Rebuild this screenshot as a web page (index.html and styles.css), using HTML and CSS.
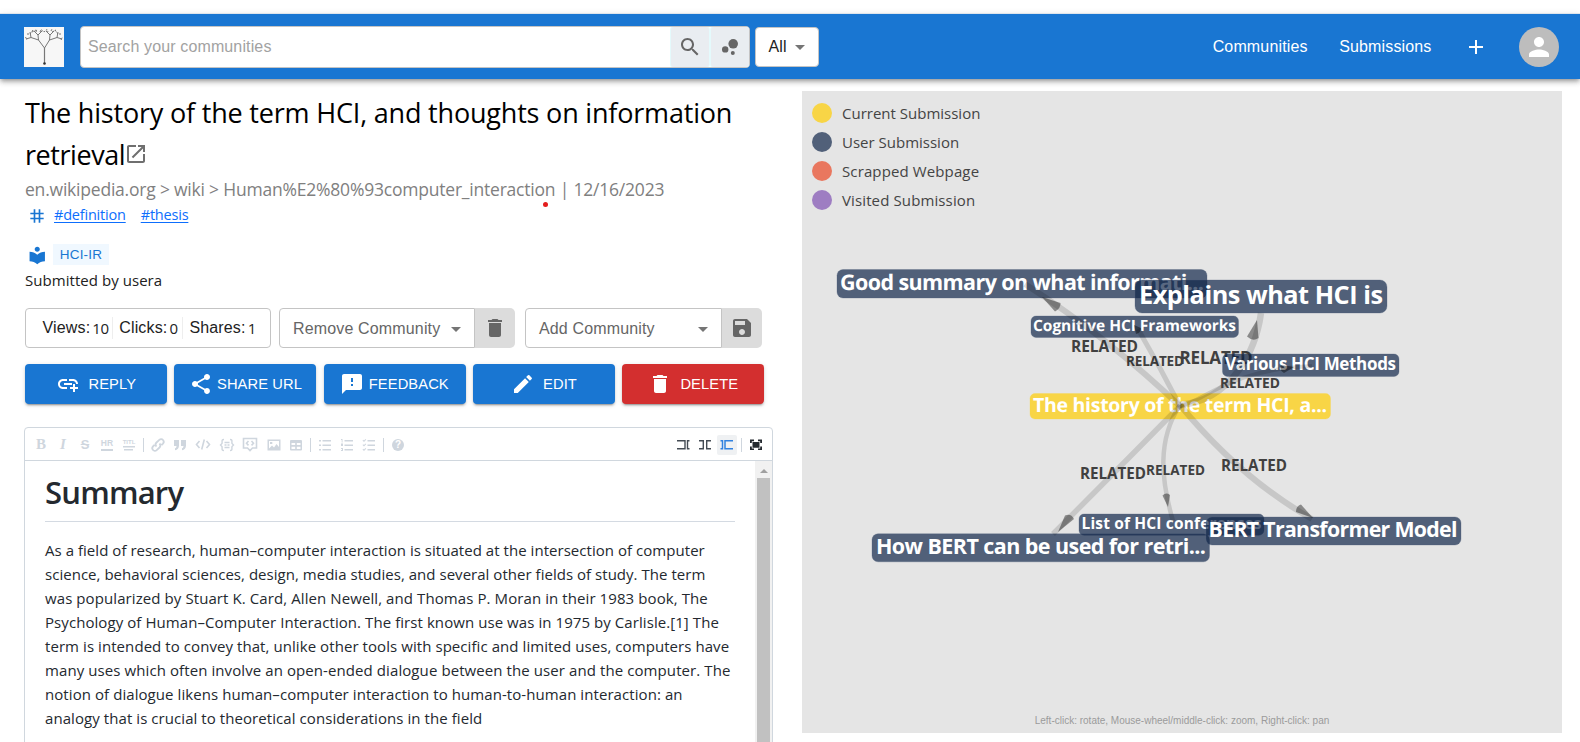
FILE: index.html
```
<!DOCTYPE html>
<html lang="en">
<head>
<meta charset="utf-8">
<title>The history of the term HCI</title>
<link rel="stylesheet" href="styles.css">
</head>
<body>
<svg width="0" height="0" class="defs">
  <symbol id="trash" viewBox="0 0 24 24"><path d="M6 19c0 1.100.9 2 2 2h8c1.100 0 2-.9 2-2V7H6v12zM19 4h-3.500l-1-1h-5l-1 1H5v2h14V4z"/></symbol>
  <symbol id="caret" viewBox="0 0 24 24"><path d="m7 10 5 5 5-5z"/></symbol>
</svg>
<header class="bar">
  <svg class="logo" viewBox="0 0 40 40">
    <g fill="none" stroke="#777" stroke-width="1">
      <path stroke-width="1.200" d="M20.500 37V21"/>
      <path d="M20.500 21L14.500 13M20.500 21L25.500 13"/>
      <path d="M14.500 13L7 10.500M14.500 13L14 8M25.500 13L26 8M25.500 13L33 10.500"/>
      <path d="M7 10.500L2 12M7 10.500L6 5M14 8L10 4M14 8L18 4M26 8L22 4M26 8L30 4M33 10.500L38 12M33 10.500L34 5"/>
      <path stroke-dasharray="2 1" d="M1.500 10L3 13M3 7L6 7L9 3M8 5L12 3M12 5L13 2M16 5L17 2.500L20 5L23 2.500L24 5M27 4L28 2M28 5L32 3M31 3L34 7L37 7M37 13L38.500 10"/>
    </g>
    <circle cx="20.500" cy="36.500" r="1.300" fill="#333"/>
  </svg>
  <div class="search">
    <span class="placeholder">Search your communities</span>
    <button class="sbtn"><svg viewBox="0 0 24 24"><path d="M15.500 14h-.79l-.28-.27C15.410 12.590 16 11.110 16 9.500 16 5.910 13.090 3 9.500 3S3 5.910 3 9.500 5.910 16 9.500 16c1.610 0 3.090-.59 4.230-1.570l.27.28v.79l5 4.990L20.490 19l-4.990-5zm-6 0C7.010 14 5 11.990 5 9.500S7.010 5 9.500 5 14 7.010 14 9.500 11.990 14 9.500 14z"/></svg></button>
    <button class="sbtn"><svg viewBox="0 0 24 24"><circle cx="7.200" cy="14.400" r="3.200"/><circle cx="14.800" cy="18" r="2"/><circle cx="15.200" cy="8.800" r="4.800"/></svg></button>
  </div>
  <div class="scope"><span>All</span><svg viewBox="0 0 24 24"><use href="#caret"/></svg></div>
  <nav class="nav">
    <a class="n1">Communities</a><a class="n2">Submissions</a>
    <svg class="plus" viewBox="0 0 24 24"><path d="M19 13h-6v6h-2v-6H5v-2h6V5h2v6h6v2z"/></svg>
    <span class="avatar"><svg viewBox="0 0 24 24"><path d="M12 12c2.210 0 4-1.790 4-4s-1.790-4-4-4-4 1.790-4 4 1.790 4 4 4zm0 2c-2.670 0-8 1.340-8 4v2h16v-2c0-2.660-5.330-4-8-4z"/></svg></span>
  </nav>
</header>
<main class="main">
  <section class="left">
    <h1 class="title"><span class="t1">The history of the term HCI, and thoughts on information</span><br><span class="t2">retrieval</span><svg class="open" viewBox="0 0 24 24"><path d="M19 19H5V5h7V3H5c-1.110 0-2 .9-2 2v14c0 1.100.89 2 2 2h14c1.100 0 2-.9 2-2v-7h-2v7zM14 3v2h3.590l-9.830 9.830 1.410 1.410L19 6.410V10h2V3h-7z"/></svg></h1>
    <div class="meta">en.wikipedia.org &gt; wiki &gt; Human%E2%80%93computer_interaction | 12/16/2023<i class="dot"></i></div>
    <div class="tags">
      <svg viewBox="0 0 24 24"><path d="M20 10V8h-4V4h-2v4h-4V4H8v4H4v2h4v4H4v2h4v4h2v-4h4v4h2v-4h4v-2h-4v-4h4zm-6 4h-4v-4h4v4z"/></svg>
      <a>#definition</a><a>#thesis</a>
    </div>
    <div class="community">
      <svg viewBox="0 0 24 24"><path d="M12 11.550C9.640 9.350 6.480 8 3 8v11c3.480 0 6.640 1.350 9 3.550 2.360-2.190 5.520-3.550 9-3.550V8c-3.480 0-6.640 1.350-9 3.550zM12 8c1.660 0 3-1.340 3-3s-1.340-3-3-3-3 1.340-3 3 1.340 3 3 3z"/></svg>
      <span class="chip">HCI-IR</span>
    </div>
    <div class="by">Submitted by usera</div>
    <div class="controls">
      <div class="stats"><span>Views:</span><b class="v1">10</b><span>Clicks:</span><b class="v2">0</b><span>Shares:</span><b class="v3">1</b></div>
      <div class="pick remove"><div class="sel"><span>Remove Community</span><svg viewBox="0 0 24 24"><use href="#caret"/></svg></div><button class="act"><svg viewBox="0 0 24 24"><use href="#trash"/></svg></button></div>
      <div class="pick add"><div class="sel"><span>Add Community</span><svg viewBox="0 0 24 24"><use href="#caret"/></svg></div><button class="act"><svg viewBox="0 0 24 24"><path d="M17 3H5c-1.110 0-2 .9-2 2v14c0 1.100.89 2 2 2h14c1.100 0 2-.9 2-2V7l-4-4zm-5 16c-1.660 0-3-1.340-3-3s1.340-3 3-3 3 1.340 3 3-1.340 3-3 3zm3-10H5V5h10v4z"/></svg></button></div>
    </div>
    <div class="actions">
      <button class="btn reply"><svg viewBox="0 0 24 24"><path d="M8 11h8v2H8zm12.100 1H22c0-2.760-2.240-5-5-5h-4v1.900h4c1.710 0 3.100 1.390 3.100 3.100zM3.900 12c0-1.710 1.390-3.100 3.100-3.100h4V7H7c-2.760 0-5 2.240-5 5s2.240 5 5 5h4v-1.900H7c-1.710 0-3.100-1.390-3.100-3.100zM19 12h-2v3h-3v2h3v3h2v-3h3v-2h-3z"/></svg>REPLY</button>
      <button class="btn share"><svg viewBox="0 0 24 24"><path d="M18 16.080c-.76 0-1.440.3-1.960.77L8.910 12.700c.05-.23.09-.46.09-.7s-.04-.47-.09-.7l7.050-4.110c.54.5 1.250.81 2.040.81 1.660 0 3-1.340 3-3s-1.340-3-3-3-3 1.340-3 3c0 .24.04.47.09.7L8.040 9.810C7.500 9.310 6.790 9 6 9c-1.660 0-3 1.340-3 3s1.340 3 3 3c.79 0 1.500-.31 2.040-.81l7.120 4.160c-.05.21-.08.43-.08.65 0 1.610 1.310 2.920 2.920 2.920 1.610 0 2.920-1.310 2.920-2.920s-1.310-2.920-2.920-2.920z"/></svg>SHARE URL</button>
      <button class="btn feed"><svg viewBox="0 0 24 24"><path d="M20 2H4c-1.100 0-1.990.9-1.990 2L2 22l4-4h14c1.100 0 2-.9 2-2V4c0-1.100-.9-2-2-2zm-7 12h-2v-2h2v2zm0-4h-2V6h2v4z"/></svg>FEEDBACK</button>
      <button class="btn edit"><svg viewBox="0 0 24 24"><path d="M3 17.250V21h3.750L17.810 9.940l-3.750-3.750L3 17.250zM20.710 7.040c.39-.39.39-1.020 0-1.410l-2.340-2.340a.996.996 0 0 0-1.410 0l-1.830 1.830 3.750 3.750 1.830-1.830z"/></svg>EDIT</button>
      <button class="btn delete"><svg viewBox="0 0 24 24"><use href="#trash"/></svg>DELETE</button>
    </div>
    <div class="editor">
      <div class="toolbar">
        <span class="tb serif">B</span>
        <span class="tb serif it">I</span>
        <span class="tb strike">S</span>
        <span class="tb hr">HR</span>
        <span class="tb ttl">TITL</span>
        <i class="sep"></i>
        <span class="tb"><svg viewBox="0 0 16 16" fill="none" stroke="#cfd6de" stroke-width="1.800"><path d="M6.500 9.500c-1.500-1.500-1-3 0-4l2.800-2.600c1.200-1.100 2.800-.9 3.700.1s1 2.500 0 3.600L11.500 8M9.500 6.500c1.500 1.500 1 3 0 4l-2.800 2.600c-1.200 1.100-2.800.9-3.700-.1s-1-2.500 0-3.600L4.500 8"/></svg></span>
        <span class="tb"><svg viewBox="0 0 16 16"><path d="M2 3h5v5.500C7 11 5.500 13 3 13.300v-2c1-.4 1.500-1.200 1.500-2.300H2zM9 3h5v5.500c0 2.500-1.500 4.500-4 4.800v-2c1-.4 1.500-1.200 1.500-2.300H9z"/></svg></span>
        <span class="tb w24"><svg viewBox="0 0 16 16" fill="none" stroke="#cfd6de" stroke-width="1.600"><path d="M4.500 4L1.500 7.500l3 3.500M11.500 4l3 3.500-3 3.500M9.300 2.500l-2.600 10"/></svg></span>
        <span class="tb w23"><svg viewBox="0 0 16 16" fill="none" stroke="#cfd6de" stroke-width="1.400"><path d="M5 2.500c-3 0-1.500 2-2 4L1.500 8 3 9.500c.5 2-1 4 2 4M11 2.500c3 0 1.500 2 2 4L14.500 8 13 9.500c-.5 2 1 4-2 4M5.500 5.500h5M5.500 8h2M8.500 8h2M5.500 10.500h5"/></svg></span>
        <span class="tb w24"><svg viewBox="0 0 16 16" fill="none" stroke="#cfd6de" stroke-width="1.600"><path d="M1.500 1.500h13v9.500h-4L8 13.500 5.500 11h-4zM6.500 4L4.500 6.200l2 2.200M9.500 4l2 2.200-2 2.200"/></svg></span>
        <span class="tb w23"><svg viewBox="0 0 16 16"><path fill-rule="evenodd" d="M1.500 2.500h13v11h-13zM3 4v7.500l3-3 2 2L10.500 7l2.500 3V4zM4 5h2.300v2H4z"/></svg></span>
        <span class="tb"><svg viewBox="0 0 16 16"><path fill-rule="evenodd" d="M3 3h10a1 1 0 0 1 1 1v8.500a1 1 0 0 1-1 1H3a1 1 0 0 1-1-1V4a1 1 0 0 1 1-1zM3.500 6v2h3.700V6zM8.800 6v2h3.700V6zM3.500 9.700V12h3.700V9.700zM8.800 9.700V12h3.700V9.700z"/></svg></span>
        <i class="sep"></i>
        <span class="tb"><svg viewBox="0 0 16 16"><path d="M2 3h2v1.500H2zM5.500 3H14v1.500H5.500zM2 7.500h2V9H2zM5.500 7.500H14V9H5.500zM2 12h2v1.500H2zM5.500 12H14v1.500H5.500z"/></svg></span>
        <span class="tb"><svg viewBox="0 0 16 16"><path d="M2 2h1.500v3.500H2.700V3H2zM5.500 3H14v1.500H5.500zM2 6.500h2V9H2zM5.500 7.500H14V9H5.500zM2 11h2v3H2v-1h1v-1H2zM5.500 12H14v1.500H5.500z"/></svg></span>
        <span class="tb"><svg viewBox="0 0 16 16"><path d="M1.500 3.500l.7-.8.8.8L4.500 2l.7.7L3 5zM6.500 3H14v1.500H6.500zM1.500 8l.7-.8.8.8 1.500-1.500.7.7L3 9.500zM6.500 7.500H14V9H6.500zM1.500 12.500l.7-.8.800.8L4.500 11l.7.7L3 14zM6.500 12H14v1.500H6.500z"/></svg></span>
        <i class="sep"></i>
        <span class="tb help"><b>?</b></span>
        <div class="views">
          <span class="tb dark"><svg viewBox="0 0 16 16" fill="none" stroke="#444c54" stroke-width="1.400"><path d="M2 3.700h8v8.100H2M14.500 3.700h-2v8.100h2"/></svg></span>
          <span class="tb dark"><svg viewBox="0 0 16 16" fill="none" stroke="#444c54" stroke-width="1.400"><path d="M2 3.700h4.300v8.100H2M14 3.700H9.700v8.100H14"/></svg></span>
          <span class="tb dark on"><svg viewBox="0 0 16 16" fill="none" stroke="#3182e0" stroke-width="1.500"><path d="M1.500 3.700h2v8.100h-2M14 3.700H6v8.100h8"/></svg></span>
          <i class="sep"></i>
          <span class="tb dark"><svg viewBox="0 0 16 16"><path fill="#24292f" d="M2 2.500h4v1.700H3.800V6H2zM14 2.500h-4v1.700h2.200V6H14zM2 13.100h4v-1.700H3.800V9.600H2zM14 13.100h-4v-1.700h2.200V9.600H14zM4.500 5h7v5.700h-7z"/></svg></span>
        </div>
      </div>
      <div class="pane">
        <article class="doc">
          <h2><span>Summary</span></h2>
          <p><span class="l1">As a field of research, human–computer interaction is situated at the intersection of computer</span><br>
          <span class="l2">science, behavioral sciences, design, media studies, and several other fields of study. The term</span><br>
          <span class="l3">was popularized by Stuart K. Card, Allen Newell, and Thomas P. Moran in their 1983 book, The</span><br>
          <span class="l4">Psychology of Human–Computer Interaction. The first known use was in 1975 by Carlisle.[1] The</span><br>
          <span class="l5">term is intended to convey that, unlike other tools with specific and limited uses, computers have</span><br>
          <span class="l6">many uses which often involve an open-ended dialogue between the user and the computer. The</span><br>
          <span class="l7">notion of dialogue likens human–computer interaction to human-to-human interaction: an</span><br>
          <span class="l8">analogy that is crucial to theoretical considerations in the field</span></p>
        </article>
        <div class="scroll"><i class="up"></i><i class="thumb"></i></div>
      </div>
    </div>
  </section>
  <section class="graph">
    <svg class="net" viewBox="802 91 760 642">
      <g class="node" text-rendering="geometricPrecision">
        <rect x="837" y="269.500" width="370" height="28.500" rx="6"/><text x="840" y="290" font-size="21.500" textLength="364">Good summary on what informati...</text>
        <rect x="1031" y="316" width="207.500" height="21.500" rx="5"/><text x="1033" y="331" font-size="15.500" textLength="203">Cognitive HCI Frameworks</text>
        <rect class="cur" x="1030" y="393.500" width="300.500" height="25.500" rx="5"/><text x="1033" y="412" font-size="19.500" textLength="294">The history of the term HCI, a...</text>
      </g>
      <g class="rel">
        <text x="1071" y="352" font-size="15.500" textLength="67">RELATED</text>
        <text x="1126" y="366" font-size="13.500" textLength="58">RELATED</text>
        <text x="1179.500" y="363.700" font-size="17" textLength="73">RELATED</text>
      </g>
      <g class="node">
        <rect x="1135" y="280" width="252" height="33" rx="7"/><text x="1139" y="303.700" font-size="25.300" textLength="244">Explains what HCI is</text>
        <rect x="1222.500" y="354" width="176.500" height="22.500" rx="5"/><text x="1225" y="370.300" font-size="17" textLength="171">Various HCI Methods</text>
        <rect x="1079" y="514" width="185" height="21.300" rx="5"/><text x="1081.500" y="528.700" font-size="15.500" textLength="180">List of HCI conferences</text>
        <rect x="872" y="533.800" width="337.500" height="28" rx="6"/><text x="876" y="554.300" font-size="21.500" textLength="330">How BERT can be used for retri...</text>
        <rect x="1206" y="517" width="255" height="28" rx="6"/><text x="1208.500" y="536.700" font-size="21.300" textLength="249">BERT Transformer Model</text>
      </g>
      <g class="edge">
        <path stroke-width="6" d="M1182 408Q1110 339 1025 284"/>
        <path stroke-width="5" d="M1180 406Q1160 367 1138 329"/>
        <path stroke-width="6.500" d="M1180 405C1232 400 1256 350 1261 313"/>
        <path stroke-width="4" d="M1180 406C1205 402 1225 370 1312 366"/>
        <path stroke-width="5.500" d="M1180 406Q1115 472 1053 534"/>
        <path stroke-width="4.500" d="M1180 405C1157 440 1161 480 1173 521"/>
        <path stroke-width="6" d="M1180 405Q1240 478 1312 519"/>
      </g>
      <g class="tip">
        <path d="M1042 297L1060.500 303Q1061 308 1055 311.500Z"/>
        <path d="M1257 320L1258.500 338Q1253 342 1247 336.500Z"/>
        <path d="M1134 325L1141 328Q1141 333 1136 334Z"/>
        <path d="M1294 367L1281 365Q1279 370 1284 373Z"/>
        <path d="M1058 532L1065 515.500Q1071 513 1074 519Z"/>
        <path d="M1168 507L1162.500 495.500Q1166 492 1170 495Z"/>
        <path d="M1313 518L1296 512Q1296 506 1301 504.500Z"/>
      </g>
      <g class="rel">
        <text x="1220" y="388" font-size="13.800" textLength="60">RELATED</text>
        <text x="1080" y="478.900" font-size="15.200" textLength="66">RELATED</text>
        <text x="1146" y="475" font-size="13.500" textLength="59">RELATED</text>
        <text x="1221" y="471" font-size="15.200" textLength="66">RELATED</text>
      </g>
    </svg>
    <ul class="legend">
      <li><i class="c1"></i><span>Current Submission</span></li>
      <li><i class="c2"></i><span>User Submission</span></li>
      <li><i class="c3"></i><span class="wide">Scrapped Webpage</span></li>
      <li><i class="c4"></i><span class="wide">Visited Submission</span></li>
    </ul>
    <div class="hint">Left-click: rotate, Mouse-wheel/middle-click: zoom, Right-click: pan</div>
  </section>
</main>
</body>
</html>
```
FILE: styles.css
```
* { box-sizing: border-box; }
body { margin: 0; height: 742px; overflow: hidden; background: #fff; font-family: "Open Sans", "Noto Sans", sans-serif; padding-top: 14px; }
svg { display: block; flex: none; }
button { border: 0; padding: 0; margin: 0; font: inherit; display: flex; align-items: center; justify-content: center; }
.defs { position: absolute; }
.bar { height: 65px; background: #1976d2; display: flex; align-items: center; padding: 0 21px 0 24px; box-shadow: 0 -1px 0 #dfe5ec, 0 2px 4px -1px rgba(0,0,0,.3), 0 4px 5px rgba(0,0,0,.14), 0 1px 8px rgba(0,0,0,.1); font-family: "Liberation Sans", Arial, sans-serif; font-size: 16px; letter-spacing: .15px; position: relative; }
.logo { width: 40px; height: 40px; background: #f7f7f7; margin-top: 1px; }
.search { margin-left: 16px; width: 670px; height: 42px; background: #fff; border: 1px solid #c4c4c4; border-radius: 4px; display: flex; overflow: hidden; align-items: center; }
.placeholder { flex: 1; padding-left: 7px; color: #a2a2a2; letter-spacing: .13px; }
.sbtn { width: 38px; height: 40px; background: #e9edf1; border-radius: 3px; margin-right: 2px; box-shadow: 0 0 0 1px #e4fafc; fill: #666; }
.sbtn + .sbtn { margin-right: 0; }
.sbtn svg { width: 24px; height: 24px; }
.scope { margin-left: 5px; width: 64px; height: 40px; border: 1px solid #c4c4c4; border-radius: 4px; background: #fff; display: flex; align-items: center; padding-left: 12.500px; color: #222; fill: #757575; }
.scope svg { width: 24px; height: 24px; margin-left: 1.500px; margin-top: 1px; }
.nav { margin-left: auto; display: flex; align-items: center; color: #fff; fill: #fff; }
.n1 { margin-right: 31.500px; }
.n2 { margin-right: 32.500px; }
.plus { width: 24px; height: 24px; }
.avatar { margin-left: 31px; width: 40px; height: 40px; border-radius: 50%; background: #bdbdbd; display: flex; align-items: center; justify-content: center; }
.avatar svg { width: 30px; height: 30px; }
.main { display: flex; align-items: flex-start; height: 663px; }
.left { width: 802px; padding: 13px 0 0 25px; }
.title { margin: 0; font-size: 27px; font-weight: 400; line-height: 42px; height: 84px; color: #000; white-space: nowrap; letter-spacing: -.19px; }
.t2 { letter-spacing: -.45px; }
.open { display: inline-block; width: 24px; height: 24px; fill: #6f6f6f; vertical-align: -1px; margin-left: -1px; }
.meta { height: 26px; line-height: 26px; font-size: 17.500px; letter-spacing: -.21px; color: #808080; position: relative; white-space: nowrap; }
.dot { position: absolute; left: 518px; top: 26px; width: 5px; height: 5px; border-radius: 50%; background: #e41d1d; }
.tags { display: flex; align-items: center; height: 24px; padding-left: 2px; font-size: 14.500px; letter-spacing: -.2px; }
.tags svg { width: 20px; height: 20px; fill: #1976d2; margin-right: 7px; margin-top: 3px; }
.tags a { color: #0d6efd; text-decoration: underline; text-underline-offset: 2px; margin-right: 15px; }
.community { margin-top: 18px; display: flex; height: 21px; padding-left: 1.500px; }
.community svg { width: 20.500px; height: 20.500px; fill: #1976d2; margin-top: 1px; }
.chip { margin-left: 6px; width: 56px; background: #f0f8ff; color: #1976d2; font: 13.500px/22px "Liberation Sans", Arial, sans-serif; letter-spacing: .2px; text-align: center; }
.by { margin-top: 3px; height: 24px; line-height: 24px; font-size: 15px; letter-spacing: .05px; color: #212121; }
.controls { margin-top: 16px; display: flex; height: 40px; font-family: "Liberation Sans", Arial, sans-serif; font-size: 16px; letter-spacing: .15px; }
.stats { width: 246px; border: 1px solid #c4c4c4; border-radius: 4px; display: flex; align-items: center; padding-left: 16.500px; color: #222; white-space: nowrap; }
.stats b { font: 400 15px/22px "Open Sans", sans-serif; letter-spacing: -.3px; padding-left: 2px; border-right: 1px solid #eee; margin-right: 6px; }
.v1 { width: 23px; }
.v2 { width: 16px; }
.stats .v3 { border: 0; }
.pick { display: flex; margin-left: 8px; }
.add { margin-left: 10px; }
.sel { width: 196px; border: 1px solid #c4c4c4; border-radius: 4px 0 0 4px; display: flex; align-items: center; justify-content: space-between; padding: 1px 6px 0 13px; color: #666; fill: #757575; }
.add .sel { width: 197px; }
.sel svg { width: 24px; height: 24px; }
.act { width: 40px; background: #dcdcdc; border-radius: 0 5px 5px 0; fill: #666; }
.act svg { width: 24px; height: 24px; }
.actions { margin-top: 16px; display: flex; gap: 7.250px; height: 40px; }
.btn { width: 142px; border-radius: 4px; background: #1976d2; color: #fff; fill: #fff; font: 14.700px "Liberation Sans", Arial, sans-serif; letter-spacing: .1px; box-shadow: 0 3px 1px -2px rgba(0,0,0,.2), 0 2px 2px rgba(0,0,0,.14), 0 1px 5px rgba(0,0,0,.12); white-space: nowrap; }
.btn svg { width: 24px; height: 24px; margin-right: 8.500px; }
.share svg, .feed svg { margin-right: 4.500px; }
.delete { background: #d32f2f; }
.editor { margin: 23px 0 0 -1px; width: 749px; height: 330px; border: 1px solid #d0d7de; border-radius: 4px; font-family: "Open Sans", sans-serif; }
.toolbar { height: 33px; border-bottom: 1px solid #d0d7de; display: flex; align-items: center; padding: 1px 0 0 5px; }
.tb { width: 22px; height: 20px; display: flex; align-items: center; justify-content: center; color: #cfd6de; fill: #cfd6de; font-weight: 700; flex: none; }
.tb svg { width: 16px; height: 16px; }
.w23 { width: 23px; }
.w24 { width: 24px; }
.sep { width: 1px; height: 14px; background: #cfd6de; margin: 0 3px; }
.serif { font-family: "Liberation Serif", serif; font-size: 15px; }
.it { font-style: italic; }
.strike { font: 700 13px "Liberation Sans", sans-serif; text-decoration: line-through; }
.hr, .ttl { font: 700 8.500px/8px "Liberation Sans", sans-serif; }
.hr { background: linear-gradient(#cfd6de, #cfd6de) center 14px / 12px 2px no-repeat; padding-bottom: 3px; }
.ttl { font-size: 6px; background: linear-gradient(#cfd6de, #cfd6de) center 11px / 12px 1.500px no-repeat, linear-gradient(#cfd6de, #cfd6de) 6px 14px / 9px 1.500px no-repeat; padding-bottom: 6px; }
.help b { width: 12px; height: 12px; border-radius: 50%; background: #cfd6de; color: #fff; font: 700 10px/12px "Liberation Sans", sans-serif; text-align: center; }
.views { margin-left: auto; display: flex; align-items: center; padding-right: 5px; }
.on { background: #eff1f3; width: 20px; margin: 0 1px; border-radius: 2px; }
.pane { display: flex; height: 296px; justify-content: space-between; }
.doc { padding: 0 0 0 20px; color: #24292f; white-space: nowrap; }
.doc h2 { margin: 8px 0 0; width: 690px; height: 53px; border-bottom: 1px solid #d4dae2; font-size: 31px; line-height: 46px; font-weight: 600; letter-spacing: -.8px; }
.doc p { margin: 16px 0 0; font-size: 15px; line-height: 24px; letter-spacing: .07px; }
.l1 { letter-spacing: .04px; }
.l2 { letter-spacing: .03px; }
.l3, .l6 { letter-spacing: .088px; }
.scroll { width: 17px; background: #f1f1f1; display: flex; flex-direction: column; align-items: center; }
.up { margin-top: 8px; border: 4px solid transparent; border-top: 0; border-bottom-color: #a0a0a0; }
.thumb { margin-top: 5px; width: 13px; flex: 1; background: #c1c1c1; }
.graph { position: relative; margin-top: 12px; width: 760px; height: 642px; background: #e5e5e5; }
.net { width: 760px; height: 642px; }
.node rect { fill: #0e2448; fill-opacity: .69; stroke: #516079; stroke-opacity: .3; }
.node .cur { fill: #f8d546; fill-opacity: 1; stroke: #f8d546; }
.node text { fill: #fff; font-weight: 700; }
.rel text { fill: #404040; font-weight: 700; }
.edge path { fill: none; stroke: #000; stroke-opacity: .13; }
.tip path { fill: #000; fill-opacity: .4; }
.legend { position: absolute; left: 10px; top: 12px; margin: 0; padding: 0; list-style: none; display: flex; flex-direction: column; gap: 9px; }
.legend li { display: flex; height: 20px; align-items: center; gap: 10px; font-size: 15px; color: #444; }
.legend i { width: 20px; height: 20px; border-radius: 50%; }
.wide { letter-spacing: .12px; }
.c1 { background: #f8d546; }
.c2 { background: #516079; }
.c3 { background: #e9775f; }
.c4 { background: #9e7dc2; }
.hint { position: absolute; left: 0; right: 0; bottom: 6px; text-align: center; font: 10px/12px "Liberation Sans", Arial, sans-serif; color: #9b9b9b; }
```
